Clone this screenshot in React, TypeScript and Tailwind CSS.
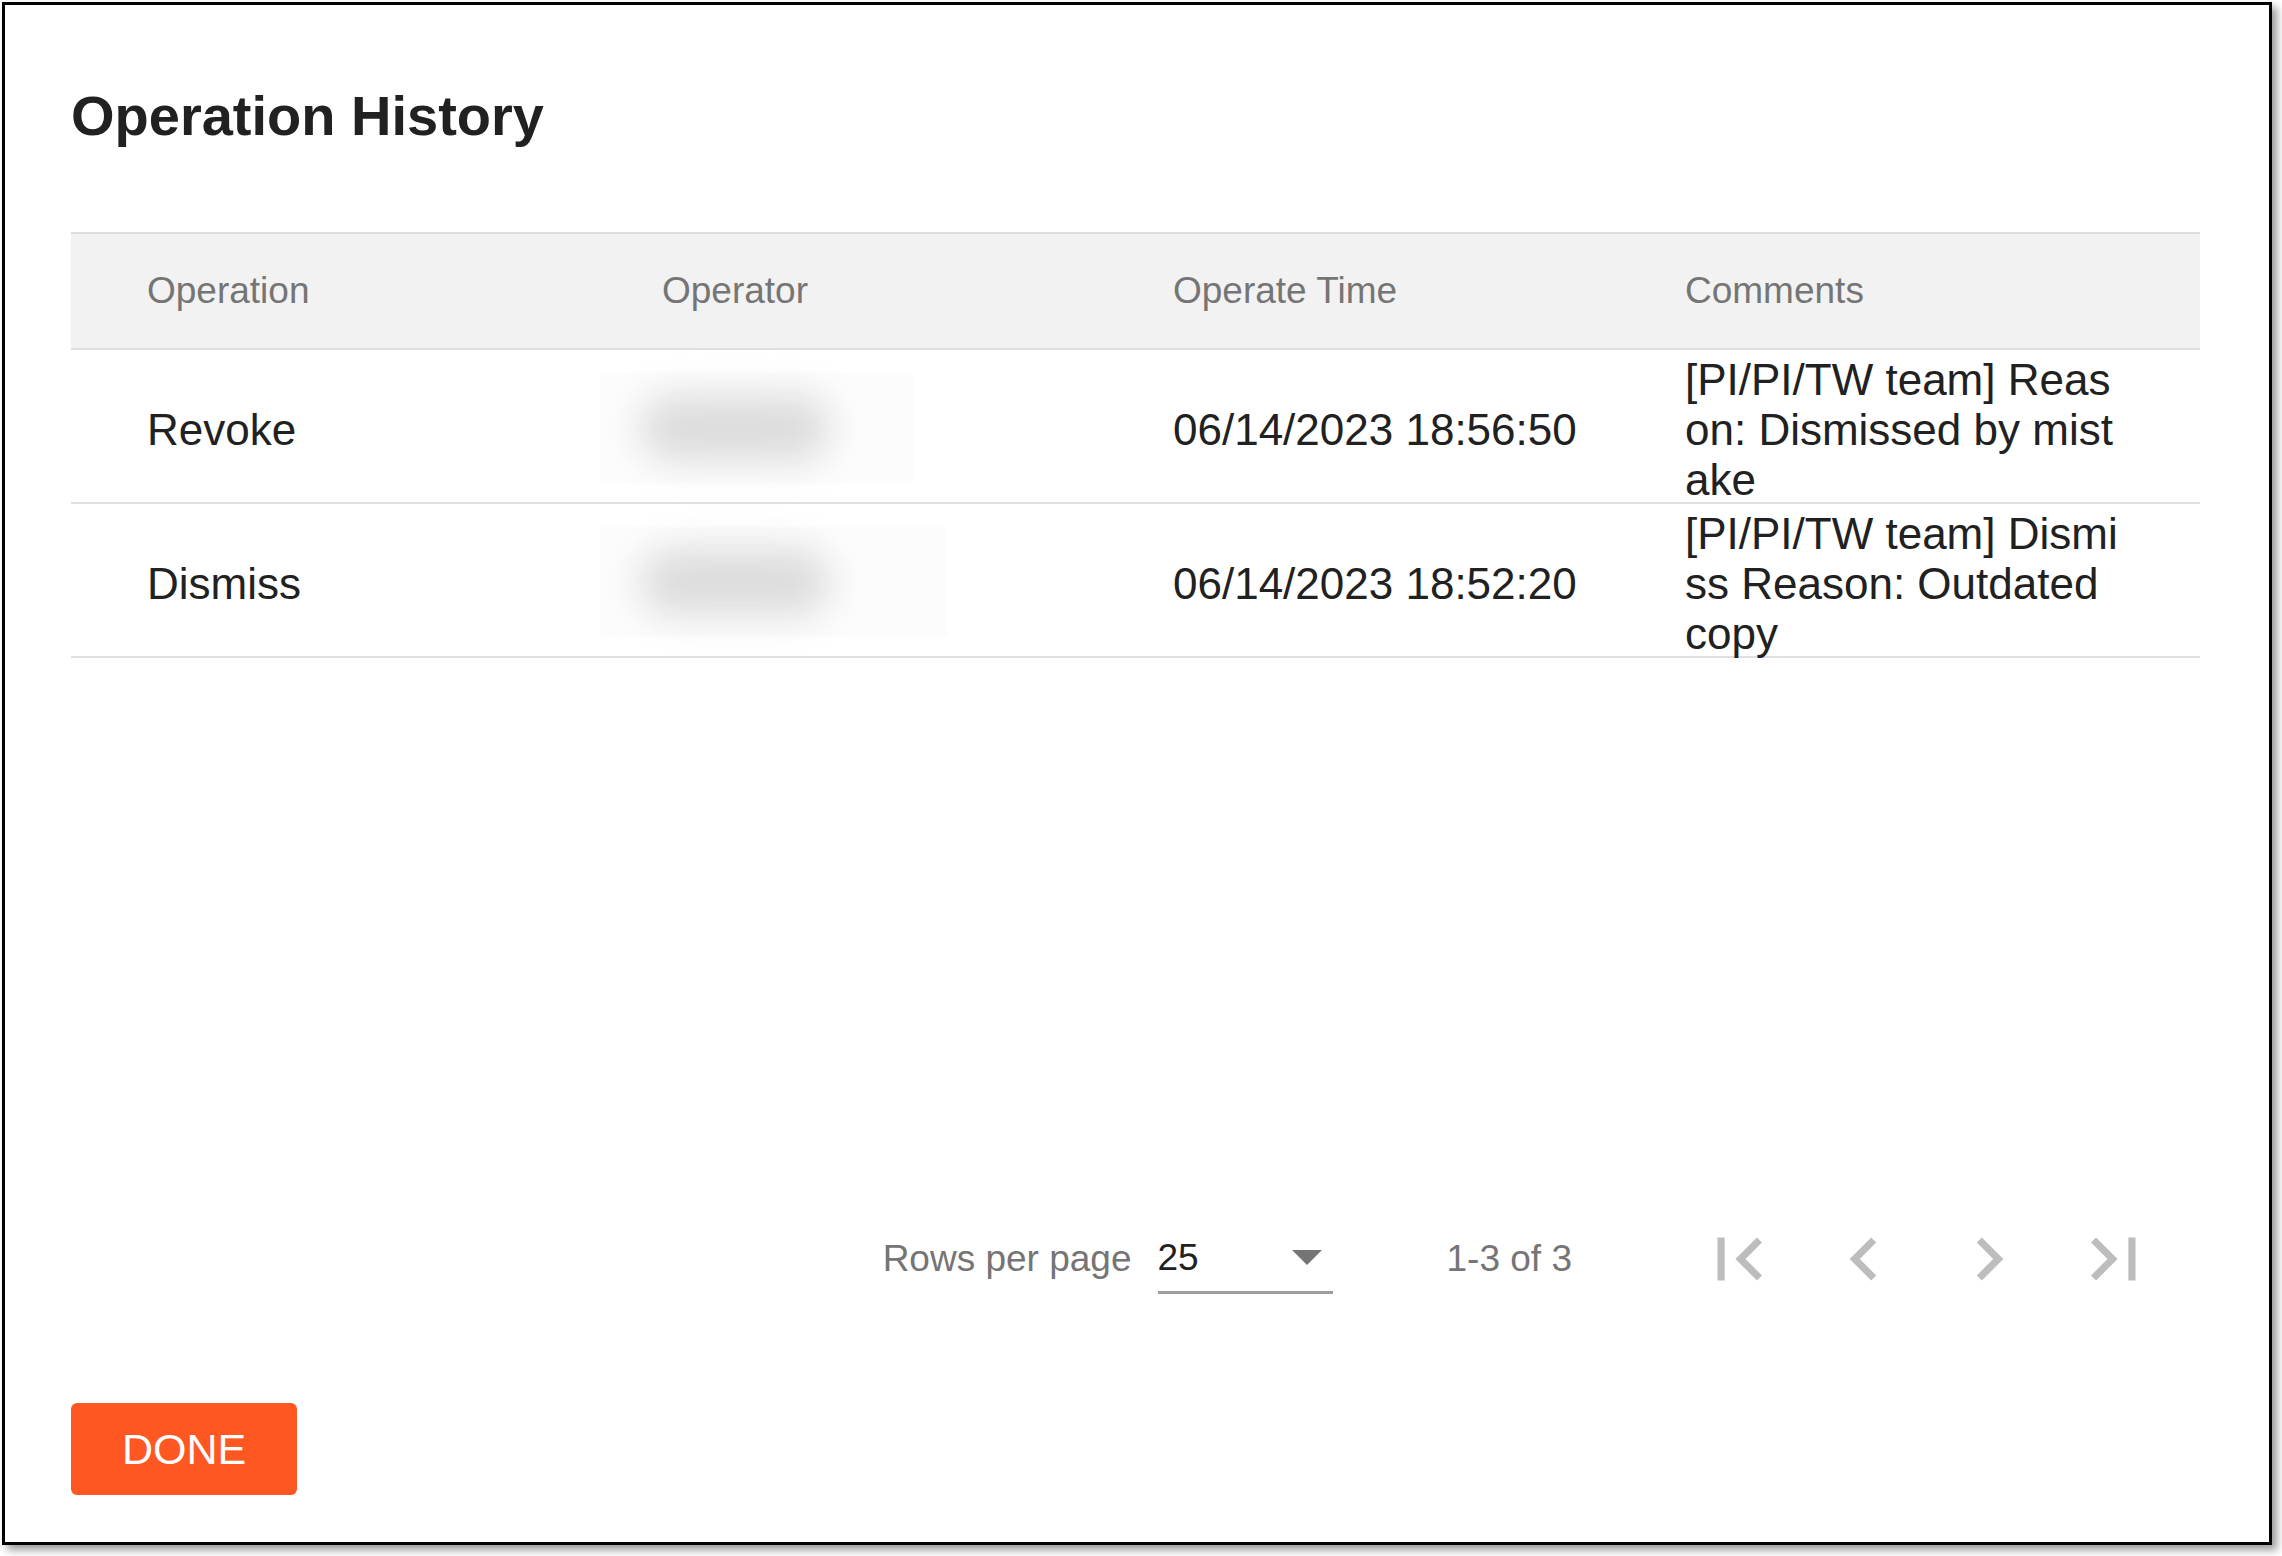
import React from "react";

const rows = [
  {
    op: "Revoke",
    time: "06/14/2023 18:56:50",
    comment: "[PI/PI/TW team] Reason: Dismissed by mistake",
    rectW: 313,
  },
  {
    op: "Dismiss",
    time: "06/14/2023 18:52:20",
    comment: "[PI/PI/TW team] Dismiss Reason: Outdated copy",
    rectW: 347,
  },
];

function Icon({ d }: { d: string }) {
  return (
    <svg width="86" height="86" viewBox="0 0 24 24" fill="#bdbdbd">
      <path d={d} />
    </svg>
  );
}

export default function App() {
  return (
    <div className="w-[2282px] h-[1556px] bg-white p-[2px] font-['Liberation_Sans',Arial,sans-serif]">
      <div className="w-[2270px] h-[1543px] border-[3px] border-black bg-white shadow-[5px_5px_8px_rgba(0,0,0,0.4)] flex flex-col pl-[66px] pr-[69px]">
        <h1 className="mt-[79px] h-[64px] leading-[64px] text-[56px] font-bold text-[#212121]">
          Operation History
        </h1>

        <div className="mt-[84px] w-[2129px]">
          <div className="grid grid-cols-[515px_511px_512px_591px] h-[118px] bg-[#f2f2f2] border-y-2 border-[#dedede] items-center text-[37px] text-[#757575]">
            <div className="pl-[76px]">Operation</div>
            <div className="pl-[76px]">Operator</div>
            <div className="pl-[76px]">Operate Time</div>
            <div className="pl-[76px]">Comments</div>
          </div>
          {rows.map((r) => (
            <div
              key={r.op}
              className="grid grid-cols-[515px_511px_512px_591px] h-[154px] border-b-2 border-[#e0e0e0] items-center text-[44px] text-[#212121]"
            >
              <div className="pl-[76px] pt-[5px]">{r.op}</div>
              <div className="pl-[14px] flex items-center">
                <div
                  className="h-[110px] bg-[#fcfcfc] flex items-center pl-[40px]"
                  style={{ width: r.rectW }}
                >
                  <div className="w-[190px] h-[66px] rounded-full bg-[#dcdcdc] blur-[18px]" />
                </div>
              </div>
              <div className="pl-[76px] pt-[5px]">{r.time}</div>
              <div className="pl-[76px] pr-[80px] pt-[5px] leading-[50px] break-all">{r.comment}</div>
            </div>
          ))}
        </div>

        <div className="mt-[561px] h-[80px] flex items-center justify-end mr-[24px] text-[37px] text-[#757575]">
          <span>Rows per page</span>
          <div className="ml-[26px] w-[175px] h-[70px] border-b-[3px] border-[#9e9e9e] flex items-center pr-[11px]">
            <span className="text-[#212121]">25</span>
            <div className="flex-1" />
            <svg width="30" height="15" viewBox="0 0 30 15">
              <polygon points="0,0 30,0 15,15" fill="#757575" />
            </svg>
          </div>
          <span className="ml-[114px]">1-3 of 3</span>
          <div className="ml-[104px] flex items-center">
            <div className="w-[125px] flex justify-center">
              <Icon d="M18.41 16.59L13.82 12l4.59-4.59L17 6l-6 6 6 6zM6 6h2v12H6z" />
            </div>
            <div className="w-[125px] flex justify-center">
              <Icon d="M15.41 7.41L14 6l-6 6 6 6 1.41-1.41L10.83 12z" />
            </div>
            <div className="w-[125px] flex justify-center">
              <Icon d="M10 6L8.59 7.41 13.17 12l-4.58 4.59L10 18l6-6z" />
            </div>
            <div className="w-[125px] flex justify-center">
              <Icon d="M5.59 7.41L10.18 12l-4.59 4.59L7 18l6-6-6-6zM16 6h2v12h-2z" />
            </div>
          </div>
        </div>

        <div className="mt-[104px]">
          <button className="w-[226px] h-[92px] rounded-[6px] bg-[#ff5722] text-white text-[43px] flex items-center justify-center">
            DONE
          </button>
        </div>
      </div>
    </div>
  );
}
